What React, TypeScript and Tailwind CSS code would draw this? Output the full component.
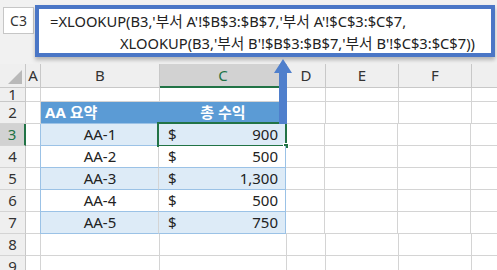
import React from "react";

const cols = [
  { key: "hdr", label: "", w: "w-[26px]" },
  { key: "A", label: "A", w: "w-[15px]" },
  { key: "B", label: "B", w: "w-[119px]" },
  { key: "C", label: "C", w: "w-[127px]" },
  { key: "D", label: "D", w: "w-[39px]" },
  { key: "E", label: "E", w: "w-[73px]" },
  { key: "F", label: "F", w: "w-[73px]" },
  { key: "G", label: "", w: "w-[73px]" },
];

const rows = [
  { n: 3, name: "AA-1", value: "900", band: true },
  { n: 4, name: "AA-2", value: "500", band: false },
  { n: 5, name: "AA-3", value: "1,300", band: true },
  { n: 6, name: "AA-4", value: "500", band: false },
  { n: 7, name: "AA-5", value: "750", band: true },
];

const RowHeader = ({ n, active }: { n: number; active?: boolean }) => (
  <div
    className={`w-[26px] shrink-0 flex items-center justify-center border-b border-[#d4d4d4] ${
      active ? "bg-[#d2d2d2] border-r-2 border-r-[#217346] text-[#217346]" : "bg-[#efefef] border-r border-r-[#c8c8c8] text-[#333]"
    }`}
  >
    {n}
  </div>
);

const Empty = ({ w }: { w: string }) => (
  <div className={`${w} shrink-0 border-r border-b border-[#d4d4d4]`} />
);

export default function App() {
  return (
    <div
      className="relative w-[497px] h-[270px] overflow-hidden bg-white text-[15px] text-[#222]"
      style={{ fontFamily: '"Noto Sans", "Noto Sans CJK KR", sans-serif' }}
    >
      {/* formula bar */}
      <div className="flex h-[64px] bg-[#f1f1f1]">
        <div className="ml-[3px] mt-[7px] w-[31px] h-[27px] bg-white border border-[#c6c6c6] flex items-center justify-center text-[14px] text-[#333]">
          C3
        </div>
        <div className="ml-[1px] mt-[5px] w-[460px] h-[52px] shrink-0 bg-white border-4 border-[#4a76c6] shadow-[0_3px_4px_rgba(0,0,0,0.25)] text-[14.7px] leading-[22px] text-[#222] pt-px">
          <div className="pl-[11px] whitespace-nowrap">=XLOOKUP(B3,'부서 A'!$B$3:$B$7,'부서 A'!$C$3:$C$7,</div>
          <div className="pl-[81px] whitespace-nowrap">XLOOKUP(B3,'부서 B'!$B$3:$B$7,'부서 B'!$C$3:$C$7))</div>
        </div>
      </div>

      {/* column headers */}
      <div className="flex h-[24px]">
        <div className="w-[26px] shrink-0 bg-[#efefef] border-r border-b border-[#c8c8c8] relative">
          <div className="absolute right-[3px] bottom-[3px] w-0 h-0 border-l-[14px] border-l-transparent border-b-[14px] border-b-[#b9b9b9]" />
        </div>
        {cols.slice(1).map((c) => (
          <div
            key={c.key}
            className={`${c.w} shrink-0 flex items-center justify-center ${
              c.key === "C"
                ? "bg-[#d2d2d2] border-b-2 border-b-[#217346] border-r border-r-[#c8c8c8] text-[#217346]"
                : "bg-[#efefef] border-r border-b border-[#c8c8c8] text-[#333]"
            }`}
          >
            {c.label}
          </div>
        ))}
      </div>

      {/* row 1 */}
      <div className="flex h-[14px] overflow-hidden">
        <div className="w-[26px] shrink-0 bg-[#efefef] border-r border-b border-[#c8c8c8] flex justify-center items-end text-[#333] leading-[14px]">1</div>
        {cols.slice(1).map((c) => (
          <Empty key={c.key} w={c.w} />
        ))}
      </div>

      {/* row 2 - table header */}
      <div className="flex h-[22px]">
        <RowHeader n={2} />
        <Empty w="w-[15px]" />
        <div className="w-[119px] shrink-0 bg-[#5b9bd5] text-white font-bold pl-[4px] flex items-center border-b border-[#9bc2e6]">
          AA 요약
        </div>
        <div className="w-[127px] shrink-0 bg-[#5b9bd5] text-white font-bold flex items-center justify-center border-b border-[#9bc2e6] border-r border-r-[#9bc2e6]">
          총 수익
        </div>
        <Empty w="w-[39px]" />
        <Empty w="w-[73px]" />
        <Empty w="w-[73px]" />
        <Empty w="w-[73px]" />
      </div>

      {rows.map((r) => (
        <div key={r.n} className="flex h-[22px]">
          <RowHeader n={r.n} active={r.n === 3} />
          <Empty w="w-[15px]" />
          <div
            className={`w-[119px] shrink-0 flex items-center justify-center border-l border-l-[#9bc2e6] border-r border-r-[#d4d4d4] border-b border-b-[#9bc2e6] -ml-px ${
              r.band ? "bg-[#ddebf7]" : "bg-white"
            }`}
          >
            <span className="ml-px">{r.name}</span>
          </div>
          <div
            className={`relative w-[127px] shrink-0 flex items-center justify-between pl-[9px] pr-[7px] border-r border-r-[#9bc2e6] border-b border-b-[#9bc2e6] ${
              r.band ? "bg-[#ddebf7]" : "bg-white"
            }`}
          >
            <span>$</span>
            <span>{r.value}</span>
            {r.n === 3 && (
              <>
                <div className="absolute -left-[2px] -top-[2px] -right-[2px] -bottom-[2px] border-2 border-[#217346]" />
                <div className="absolute -right-[4px] -bottom-[4px] w-[6px] h-[6px] bg-[#217346] border border-white" />
              </>
            )}
          </div>
          <Empty w="w-[39px]" />
          <Empty w="w-[73px]" />
          <Empty w="w-[73px]" />
          <Empty w="w-[73px]" />
        </div>
      ))}

      {[8, 9].map((n) => (
        <div key={n} className="flex h-[22px]">
          <RowHeader n={n} />
          {cols.slice(1).map((c) => (
            <Empty key={c.key} w={c.w} />
          ))}
        </div>
      ))}

      {/* arrow pointing at formula */}
      <svg className="absolute left-[273px] top-[58px]" width="22" height="68" viewBox="0 0 22 68">
        <path d="M10 1 L19 15 L14 15 L14 66 L6 66 L6 15 L1 15 Z" fill="#4f7fcc" />
      </svg>
    </div>
  );
}
